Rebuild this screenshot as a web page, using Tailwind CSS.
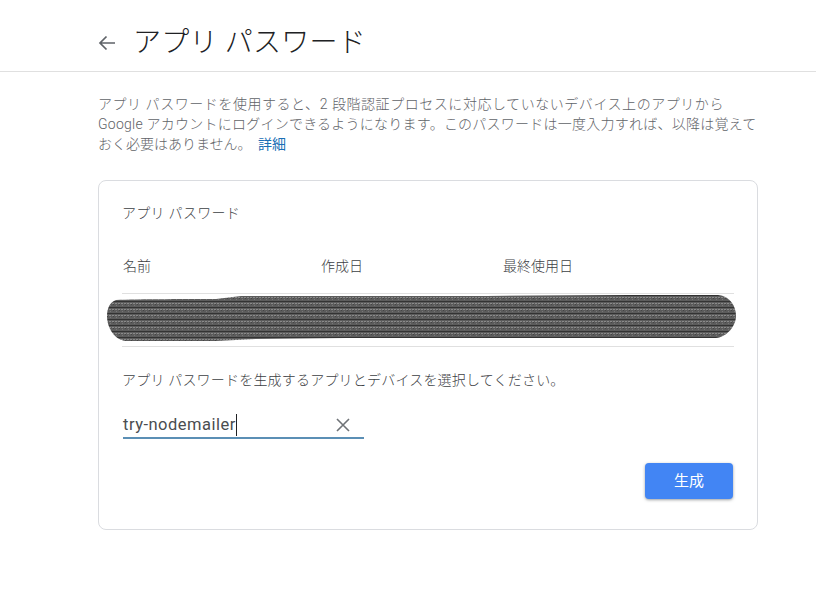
<!DOCTYPE html>
<html lang="ja">
<head>
  <meta charset="UTF-8" />
  <meta name="viewport" content="width=device-width, initial-scale=1.0" />
  <title>アプリ パスワード</title>
  <script src="https://cdn.jsdelivr.net/npm/@tailwindcss/browser@4"></script>
</head>
<body class="bg-white font-['Roboto','Noto_Sans_CJK_JP',sans-serif] overflow-hidden">
  <!-- Header -->
  <header class="h-[72px] border-b border-[#e0e0e0] pl-[98px] flex items-center">
    <svg class="w-[18px] h-[18px] mt-[14px]" viewBox="0 0 18 18" fill="none" stroke="#5f6368" stroke-width="1.7">
      <path d="M17 9H2M8.5 2.5 2 9l6.5 6.5" />
    </svg>
    <h1 class="ml-[17px] mt-[15px] text-[28px] leading-[36px] tracking-[0.25px] font-light text-[#202124] whitespace-nowrap">アプリ パスワード</h1>
  </header>

  <main class="pl-[98px] w-[758px]">
    <p class="mt-[22px] text-[14px] leading-[20px] text-[#5f6368] font-light whitespace-nowrap">
      <span class="tracking-[0.55px]">アプリ パスワードを使用すると、2 段階認証プロセスに対応していないデバイス上のアプリから</span><br />
      <span class="tracking-[0.24px]">Google アカウントにログインできるようになります。このパスワードは一度入力すれば、以降は覚えて</span><br />
      おく必要はありません。 <a href="#" class="ml-[3px] text-[#1b6fb5] font-normal">詳細</a>
    </p>

    <!-- Card -->
    <section class="mt-[26px] h-[350px] border border-[#dadce0] rounded-lg pl-[23px] pr-[23px] relative">
      <h2 class="mt-[22px] text-[14px] leading-[20px] tracking-[0.3px] text-[#3c4043] font-light">アプリ パスワード</h2>
      <div class="mt-[33px] flex text-[14px] leading-[20px] text-[#3c4043] font-light">
        <span class="w-[198px] pl-px">名前</span>
        <span class="w-[182px] pl-px">作成日</span>
        <span class="pl-px">最終使用日</span>
      </div>
      <div class="mt-[17px] h-[54px] border-y border-[#e0e0e0]"></div>
      <p class="mt-[23px] text-[14px] leading-[20px] tracking-[0.2px] text-[#3c4043] font-light">アプリ パスワードを生成するアプリとデバイスを選択してください。</p>

      <div class="mt-[19px] ml-px w-[241px] h-[30px] pt-[3px] border-b-2 border-[#5b8fb5] flex items-center justify-between pr-[13px]">
        <span class="text-[16.5px] leading-[22px] tracking-[0.5px] text-[#4a4d50] border-r border-[#202124]">try-nodemailer</span>
        <svg class="w-[16px] h-[16px]" viewBox="0 0 16 16" fill="none" stroke="#6f7377" stroke-width="1.6">
          <path d="M2 2l12 12M14 2 2 14" />
        </svg>
      </div>

      <div class="mt-[24px] flex justify-end pr-px">
        <button class="w-[88px] h-[36px] rounded bg-[#4285f4] text-white text-[15px] shadow-[0_1px_3px_rgba(60,64,67,0.5)]">生成</button>
      </div>

      <!-- Scribbled-out row lies over the table -->
      <svg class="absolute left-[7px] top-[113px]" width="632" height="50" viewBox="0 0 632 50">
        <defs>
          <pattern id="scribble" width="6" height="6" patternUnits="userSpaceOnUse">
            <rect width="6" height="6" fill="#5c5c5c" />
            <rect y="1" width="6" height="1" fill="#333333" />
            <rect y="3" width="2" height="1" fill="#8a8a8a" />
            <rect x="3" y="3" width="2" height="1" fill="#8a8a8a" />
            <rect x="1" y="4" width="1" height="1" fill="#444444" />
            <rect x="4" y="5" width="1" height="1" fill="#777777" />
          </pattern>
        </defs>
        <path fill="url(#scribble)" d="M10 6 C30 5 90 5 110 5 L135 2 L380 2 L524 1 L612 1 C624 2 630 12 630 22 C630 32 621 43 610 44 L530 44 L400 44 L240 44 L150 45 L110 47 L20 47 C8 46 1 33 1 22 C1 14 4 8 10 6Z" />
      </svg>
    </section>
  </main>
</body>
</html>
